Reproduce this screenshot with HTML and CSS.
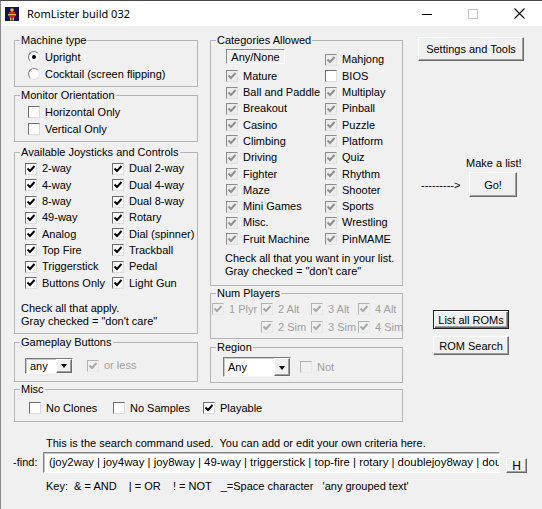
FILE: index.html
```html
<!DOCTYPE html>
<html>
<head>
<meta charset="utf-8">
<title>RomLister build 032</title>
<link rel="stylesheet" href="styles.css">
</head>
<body>
<div class="window">
  <div class="titlebar">
    <svg class="appicon" width="14" height="14" viewBox="0 0 14 14">
      <rect x="0" y="0" width="14" height="14" fill="#14145a"/>
      <circle cx="7" cy="3" r="1.8" fill="#f2c018"/>
      <rect x="4" y="5" width="6" height="2" fill="#d02020"/>
      <rect x="3" y="7" width="8" height="1.5" fill="#f2c018"/>
      <rect x="4" y="8.5" width="6" height="2" fill="#d02020"/>
      <rect x="5" y="10.5" width="1.5" height="3" fill="#f2c018"/>
      <rect x="7.5" y="10.5" width="1.5" height="3" fill="#f2c018"/>
    </svg>
    <span class="title">RomLister build 032</span>
    <div class="caps">
      <div class="cap"><svg width="10" height="10" viewBox="0 0 10 10"><line x1="0" y1="5.5" x2="10" y2="5.5" stroke="#000" stroke-width="1"/></svg></div>
      <div class="cap"><svg width="10" height="10" viewBox="0 0 10 10"><rect x="0.5" y="0.5" width="9" height="9" fill="none" stroke="#c8c8c8" stroke-width="1"/></svg></div>
      <div class="cap"><svg width="11" height="11" viewBox="0 0 11 11"><path d="M0.5 0.5 L10.5 10.5 M10.5 0.5 L0.5 10.5" stroke="#000" stroke-width="1.1"/></svg></div>
    </div>
  </div>

  <div class="client">
    <div class="top">
      <div class="col">
        <div class="group g-machine">
          <span class="legend">Machine type</span>
          <div class="stack">
            <div class="opt"><span class="radio on"></span>Upright</div>
            <div class="opt"><span class="radio"></span>Cocktail (screen flipping)</div>
          </div>
        </div>

        <div class="group g-monitor">
          <span class="legend">Monitor Orientation</span>
          <div class="stack">
            <div class="opt"><span class="box"></span>Horizontal Only</div>
            <div class="opt"><span class="box"></span>Vertical Only</div>
          </div>
        </div>

        <div class="group g-joy">
          <span class="legend">Available Joysticks and Controls</span>
          <div class="joygrid">
            <div class="opt"><span class="box on"><svg viewBox="0 0 10 10"><path d="M1.5 4.5 L4 7 L8.5 2"/></svg></span>2-way</div>
            <div class="opt"><span class="box on"><svg viewBox="0 0 10 10"><path d="M1.5 4.5 L4 7 L8.5 2"/></svg></span>Dual 2-way</div>
            <div class="opt"><span class="box on"><svg viewBox="0 0 10 10"><path d="M1.5 4.5 L4 7 L8.5 2"/></svg></span>4-way</div>
            <div class="opt"><span class="box on"><svg viewBox="0 0 10 10"><path d="M1.5 4.5 L4 7 L8.5 2"/></svg></span>Dual 4-way</div>
            <div class="opt"><span class="box on"><svg viewBox="0 0 10 10"><path d="M1.5 4.5 L4 7 L8.5 2"/></svg></span>8-way</div>
            <div class="opt"><span class="box on"><svg viewBox="0 0 10 10"><path d="M1.5 4.5 L4 7 L8.5 2"/></svg></span>Dual 8-way</div>
            <div class="opt"><span class="box on"><svg viewBox="0 0 10 10"><path d="M1.5 4.5 L4 7 L8.5 2"/></svg></span>49-way</div>
            <div class="opt"><span class="box on"><svg viewBox="0 0 10 10"><path d="M1.5 4.5 L4 7 L8.5 2"/></svg></span>Rotary</div>
            <div class="opt"><span class="box on"><svg viewBox="0 0 10 10"><path d="M1.5 4.5 L4 7 L8.5 2"/></svg></span>Analog</div>
            <div class="opt"><span class="box on"><svg viewBox="0 0 10 10"><path d="M1.5 4.5 L4 7 L8.5 2"/></svg></span>Dial (spinner)</div>
            <div class="opt"><span class="box on"><svg viewBox="0 0 10 10"><path d="M1.5 4.5 L4 7 L8.5 2"/></svg></span>Top Fire</div>
            <div class="opt"><span class="box on"><svg viewBox="0 0 10 10"><path d="M1.5 4.5 L4 7 L8.5 2"/></svg></span>Trackball</div>
            <div class="opt"><span class="box on"><svg viewBox="0 0 10 10"><path d="M1.5 4.5 L4 7 L8.5 2"/></svg></span>Triggerstick</div>
            <div class="opt"><span class="box on"><svg viewBox="0 0 10 10"><path d="M1.5 4.5 L4 7 L8.5 2"/></svg></span>Pedal</div>
            <div class="opt"><span class="box on"><svg viewBox="0 0 10 10"><path d="M1.5 4.5 L4 7 L8.5 2"/></svg></span>Buttons Only</div>
            <div class="opt"><span class="box on"><svg viewBox="0 0 10 10"><path d="M1.5 4.5 L4 7 L8.5 2"/></svg></span>Light Gun</div>
          </div>
          <div class="note joynote">Check all that apply.<br>Gray checked = "don't care"</div>
        </div>

        <div class="group g-gameplay">
          <span class="legend">Gameplay Buttons</span>
          <div class="row gprow">
            <div class="combo c-small"><span class="val">any</span><span class="drop"><span class="tri"></span></span></div>
            <div class="opt dis orless"><span class="box dis"><svg viewBox="0 0 10 10"><path d="M1.5 4.5 L4 7 L8.5 2"/></svg></span>or less</div>
          </div>
        </div>
      </div>

      <div class="col">
        <div class="group g-cat">
          <span class="legend">Categories Allowed</span>
          <div class="catgrid">
            <div class="btn sunk anynone">Any/None</div>
            <div class="opt"><span class="box gray"><svg viewBox="0 0 10 10"><path d="M1.5 4.5 L4 7 L8.5 2"/></svg></span>Mahjong</div>
            <div class="opt"><span class="box gray"><svg viewBox="0 0 10 10"><path d="M1.5 4.5 L4 7 L8.5 2"/></svg></span>Mature</div>
            <div class="opt"><span class="box"></span>BIOS</div>
            <div class="opt"><span class="box gray"><svg viewBox="0 0 10 10"><path d="M1.5 4.5 L4 7 L8.5 2"/></svg></span>Ball and Paddle</div>
            <div class="opt"><span class="box gray"><svg viewBox="0 0 10 10"><path d="M1.5 4.5 L4 7 L8.5 2"/></svg></span>Multiplay</div>
            <div class="opt"><span class="box gray"><svg viewBox="0 0 10 10"><path d="M1.5 4.5 L4 7 L8.5 2"/></svg></span>Breakout</div>
            <div class="opt"><span class="box gray"><svg viewBox="0 0 10 10"><path d="M1.5 4.5 L4 7 L8.5 2"/></svg></span>Pinball</div>
            <div class="opt"><span class="box gray"><svg viewBox="0 0 10 10"><path d="M1.5 4.5 L4 7 L8.5 2"/></svg></span>Casino</div>
            <div class="opt"><span class="box gray"><svg viewBox="0 0 10 10"><path d="M1.5 4.5 L4 7 L8.5 2"/></svg></span>Puzzle</div>
            <div class="opt"><span class="box gray"><svg viewBox="0 0 10 10"><path d="M1.5 4.5 L4 7 L8.5 2"/></svg></span>Climbing</div>
            <div class="opt"><span class="box gray"><svg viewBox="0 0 10 10"><path d="M1.5 4.5 L4 7 L8.5 2"/></svg></span>Platform</div>
            <div class="opt"><span class="box gray"><svg viewBox="0 0 10 10"><path d="M1.5 4.5 L4 7 L8.5 2"/></svg></span>Driving</div>
            <div class="opt"><span class="box gray"><svg viewBox="0 0 10 10"><path d="M1.5 4.5 L4 7 L8.5 2"/></svg></span>Quiz</div>
            <div class="opt"><span class="box gray"><svg viewBox="0 0 10 10"><path d="M1.5 4.5 L4 7 L8.5 2"/></svg></span>Fighter</div>
            <div class="opt"><span class="box gray"><svg viewBox="0 0 10 10"><path d="M1.5 4.5 L4 7 L8.5 2"/></svg></span>Rhythm</div>
            <div class="opt"><span class="box gray"><svg viewBox="0 0 10 10"><path d="M1.5 4.5 L4 7 L8.5 2"/></svg></span>Maze</div>
            <div class="opt"><span class="box gray"><svg viewBox="0 0 10 10"><path d="M1.5 4.5 L4 7 L8.5 2"/></svg></span>Shooter</div>
            <div class="opt"><span class="box gray"><svg viewBox="0 0 10 10"><path d="M1.5 4.5 L4 7 L8.5 2"/></svg></span>Mini Games</div>
            <div class="opt"><span class="box gray"><svg viewBox="0 0 10 10"><path d="M1.5 4.5 L4 7 L8.5 2"/></svg></span>Sports</div>
            <div class="opt"><span class="box gray"><svg viewBox="0 0 10 10"><path d="M1.5 4.5 L4 7 L8.5 2"/></svg></span>Misc.</div>
            <div class="opt"><span class="box gray"><svg viewBox="0 0 10 10"><path d="M1.5 4.5 L4 7 L8.5 2"/></svg></span>Wrestling</div>
            <div class="opt"><span class="box gray"><svg viewBox="0 0 10 10"><path d="M1.5 4.5 L4 7 L8.5 2"/></svg></span>Fruit Machine</div>
            <div class="opt"><span class="box gray"><svg viewBox="0 0 10 10"><path d="M1.5 4.5 L4 7 L8.5 2"/></svg></span>PinMAME</div>
          </div>
          <div class="note catnote">Check all that you want in your list.<br>Gray checked = "don't care"</div>
        </div>

        <div class="group g-players">
          <span class="legend">Num Players</span>
          <div class="plgrid">
            <div class="opt dis"><span class="box dis"><svg viewBox="0 0 10 10"><path d="M1.5 4.5 L4 7 L8.5 2"/></svg></span>1 Plyr</div>
            <div class="opt dis"><span class="box dis"><svg viewBox="0 0 10 10"><path d="M1.5 4.5 L4 7 L8.5 2"/></svg></span>2 Alt</div>
            <div class="opt dis"><span class="box dis"><svg viewBox="0 0 10 10"><path d="M1.5 4.5 L4 7 L8.5 2"/></svg></span>3 Alt</div>
            <div class="opt dis"><span class="box dis"><svg viewBox="0 0 10 10"><path d="M1.5 4.5 L4 7 L8.5 2"/></svg></span>4 Alt</div>
            <div></div>
            <div class="opt dis"><span class="box dis"><svg viewBox="0 0 10 10"><path d="M1.5 4.5 L4 7 L8.5 2"/></svg></span>2 Sim</div>
            <div class="opt dis"><span class="box dis"><svg viewBox="0 0 10 10"><path d="M1.5 4.5 L4 7 L8.5 2"/></svg></span>3 Sim</div>
            <div class="opt dis"><span class="box dis"><svg viewBox="0 0 10 10"><path d="M1.5 4.5 L4 7 L8.5 2"/></svg></span>4 Sim</div>
          </div>
        </div>

        <div class="group g-region">
          <span class="legend">Region</span>
          <div class="row regrow">
            <div class="combo c-region"><span class="val">Any</span><span class="drop"><span class="tri"></span></span></div>
            <div class="opt dis notopt"><span class="box dis"></span>Not</div>
          </div>
        </div>
      </div>

      <div class="col right">
        <div class="btn settings">Settings and Tools</div>
        <div class="makelist">Make a list!</div>
        <div class="gorow">
          <span class="arrow">---------&gt;</span>
          <div class="btn go">Go!</div>
        </div>
        <div class="btn listall">List all ROMs</div>
        <div class="btn romsearch">ROM Search</div>
      </div>
    </div>

    <div class="group g-misc">
      <span class="legend">Misc</span>
      <div class="row miscrow">
        <div class="opt m1"><span class="box"></span>No Clones</div>
        <div class="opt m2"><span class="box"></span>No Samples</div>
        <div class="opt"><span class="box on"><svg viewBox="0 0 10 10"><path d="M1.5 4.5 L4 7 L8.5 2"/></svg></span>Playable</div>
      </div>
    </div>

    <div class="search">
      <div class="searchnote">This is the search command used.  You can add or edit your own criteria here.</div>
      <div class="findrow">
        <span class="findlabel">-find:</span>
        <div class="field"><span class="fieldtext">(joy2way | joy4way | joy8way | 49-way | triggerstick | top-fire | rotary | doublejoy8way | dou</span></div>
        <div class="btn hbtn">H</div>
      </div>
      <div class="key">Key:  &amp; = AND    | = OR    ! = NOT   _=Space character   'any grouped text'</div>
    </div>
  </div>
</div>
</body>
</html>
```

FILE: styles.css
```css
* { box-sizing: border-box; }

body {
  margin: 0;
  background: #f0f0f0;
  font-family: "Liberation Sans", Arial, sans-serif;
  font-size: 11px;
  color: #000;
}

.window {
  width: 542px;
  height: 509px;
  overflow: hidden;
  background: #f0f0f0;
  border-top: 1px solid #4a4a4a;
  border-left: 1px solid #8a8a8a;
}

/* ---------- title bar ---------- */
.titlebar {
  height: 25px;
  background: #fff;
  display: flex;
  align-items: center;
}

.appicon {
  margin-left: 4px;
  flex: none;
}

.title {
  margin-left: 8px;
  font-family: "Noto Sans", "Open Sans", sans-serif;
  font-size: 11px;
  color: #000;
}

.caps {
  margin-left: auto;
  display: flex;
  height: 25px;
}

.cap {
  width: 46px;
  height: 25px;
  display: flex;
  align-items: center;
  justify-content: center;
}

/* ---------- client ---------- */
.client {
  padding: 7px 0 0 13px;
}

.top {
  display: grid;
  grid-template-columns: 184px 193px 1fr;
  column-gap: 12px;
  align-items: start;
}

.col {
  display: flex;
  flex-direction: column;
}

/* ---------- group boxes ---------- */
.group {
  border: 1px solid #b4b4b4;
}

.legend {
  display: block;
  width: max-content;
  margin: -8px 0 0 5px;
  padding: 0 1px;
  height: 14px;
  line-height: 14px;
  background: #f0f0f0;
  white-space: nowrap;
}

.g-machine { margin-top: 7px; height: 47px; }
.g-monitor { margin-top: 8px; height: 47px; }
.g-joy { margin-top: 10px; height: 182px; }
.g-gameplay { margin-top: 8px; height: 40px; }

.g-cat { margin-top: 7px; height: 246px; }
.g-players { margin-top: 7px; height: 46px; }
.g-region { margin-top: 8px; height: 36px; }

.g-misc { margin-top: 6px; width: 389px; height: 33px; }

/* ---------- options ---------- */
.opt {
  display: flex;
  align-items: center;
  gap: 5px;
  white-space: nowrap;
  height: 17px;
  line-height: 13px;
}

.opt.dis { color: #a0a0a0; }

.stack {
  margin-top: 1.5px;
  padding-left: 13px;
}

.radio {
  width: 12px;
  height: 12px;
  flex: none;
  border-radius: 50%;
  background: #fff;
  border: 1px solid;
  border-color: #7a7a7a #e4e4e4 #e4e4e4 #7a7a7a;
  display: flex;
  align-items: center;
  justify-content: center;
}

.radio.on::after {
  content: "";
  width: 4px;
  height: 4px;
  border-radius: 50%;
  background: #000;
}

.box {
  width: 12px;
  height: 12px;
  flex: none;
  background: #fff;
  border: 1px solid;
  border-color: #6e6e6e #dcdcdc #dcdcdc #6e6e6e;
  display: flex;
  align-items: center;
  justify-content: center;
}

.box svg {
  width: 10px;
  height: 10px;
  display: block;
}

.box svg path {
  fill: none;
  stroke: #000;
  stroke-width: 1.9;
}

.box.gray {
  background: #ececec;
  border-color: #8c8c8c #e0e0e0 #e0e0e0 #8c8c8c;
}

.box.gray svg path { stroke: #8e8e8e; }

.box.dis {
  background: #f0f0f0;
  border-color: #b2b2b2 #e8e8e8 #e8e8e8 #b2b2b2;
}

.box.dis svg path { stroke: #a8a8a8; }

/* joystick grid */
.joygrid {
  display: grid;
  grid-template-columns: 87px 1fr;
  grid-auto-rows: 16.3px;
  margin-top: 1.85px;
  padding-left: 10px;
}

.joygrid .opt { height: 16.3px; }

.note {
  line-height: 13px;
  white-space: nowrap;
}

.joynote {
  margin-top: 11.25px;
  padding-left: 6px;
}

/* categories */
.catgrid {
  display: grid;
  grid-template-columns: 99px 1fr;
  grid-auto-rows: 16.3px;
  margin-top: 4.85px;
  padding-left: 15px;
}

.catgrid .opt { height: 16.3px; }

.catnote {
  margin-top: 5px;
  padding-left: 14px;
}

.anynone {
  align-self: start;
  margin-top: -2.85px;
  width: 59px;
  height: 15px;
}

/* num players */
.plgrid {
  display: grid;
  grid-template-columns: 49px 50px 47px 1fr;
  grid-auto-rows: 18px;
  padding-left: 1px;
}

.plgrid .opt { height: 18px; }

/* rows */
.row {
  display: flex;
  align-items: center;
}

.gprow {
  margin-top: 8px;
  padding-left: 10px;
}

.orless { margin-left: 14px; }

.regrow {
  margin-top: 3px;
  padding-left: 12px;
}

.notopt { margin-left: 9px; }

.miscrow {
  margin-top: 3.5px;
  padding-left: 14px;
}

.m1 { width: 84px; }
.m2 { width: 90px; }

/* ---------- combos ---------- */
.combo {
  display: flex;
  background: #fff;
  border: 1px solid;
  border-color: #7a7a7a #f4f4f4 #f4f4f4 #7a7a7a;
  box-shadow: inset 1px 1px 0 #c8c8c8;
}

.c-small { width: 48px; height: 16px; }
.c-region { width: 68px; height: 20px; }

.combo .val {
  flex: 1;
  padding-left: 4px;
  display: flex;
  align-items: center;
}

.combo .drop {
  width: 16px;
  background: #f0f0f0;
  border: 1px solid;
  border-color: #fff #6a6a6a #6a6a6a #fff;
  box-shadow: inset -1px -1px 0 #a0a0a0;
  display: flex;
  align-items: center;
  justify-content: center;
}

.tri {
  width: 0;
  height: 0;
  border-left: 3.5px solid transparent;
  border-right: 3.5px solid transparent;
  border-top: 4px solid #000;
  margin-top: 1px;
}

/* ---------- buttons ---------- */
.btn {
  background: #f0f0f0;
  border: 1px solid;
  border-color: #fff #696969 #696969 #fff;
  box-shadow: inset -1px -1px 0 #a0a0a0;
  display: flex;
  align-items: center;
  justify-content: center;
  white-space: nowrap;
}

.btn.sunk {
  border-color: #8a8a8a #fff #fff #8a8a8a;
  box-shadow: none;
}

.right {
  padding-left: 3px;
}

.settings {
  margin-top: 4px;
  width: 106px;
  height: 24px;
}

.makelist {
  margin-top: 95.5px;
  margin-left: 48px;
  line-height: 13px;
  white-space: nowrap;
}

.gorow {
  display: flex;
  align-items: center;
  margin-top: 2.5px;
}

.arrow {
  margin-left: 3px;
  width: 48px;
  white-space: nowrap;
}

.go {
  width: 48px;
  height: 25px;
}

.listall {
  margin-top: 113px;
  margin-left: 15px;
  width: 76px;
  height: 19px;
  border-color: #222;
  box-shadow: inset 1px 1px 0 #fff, inset -1px -1px 0 #696969, inset -2px -2px 0 #a0a0a0;
}

.romsearch {
  margin-top: 7px;
  margin-left: 15px;
  width: 76px;
  height: 19px;
}

/* ---------- search area ---------- */
.searchnote {
  margin-top: 14.5px;
  margin-left: 32px;
  line-height: 13px;
  white-space: pre;
}

.findrow {
  display: flex;
  align-items: flex-start;
  margin-top: 2.5px;
  margin-left: -1px;
}

.findlabel {
  width: 30px;
  line-height: 21px;
  white-space: nowrap;
}

.field {
  width: 457px;
  height: 21px;
  background: #fff;
  border: 1px solid;
  border-color: #828282 #fff #fff #828282;
  box-shadow: inset 1px 1px 0 #c4c4c4;
  padding-left: 5px;
  line-height: 19px;
  white-space: nowrap;
  overflow: hidden;
}

.fieldtext {
  display: block;
  font-size: 11.4px;
  overflow: hidden;
}

.hbtn {
  margin-left: 6px;
  margin-top: 6px;
  width: 21px;
  height: 15px;
  font-size: 12px;
}

.key {
  margin-top: 6.5px;
  margin-left: 32px;
  line-height: 13px;
  white-space: pre;
}
```
